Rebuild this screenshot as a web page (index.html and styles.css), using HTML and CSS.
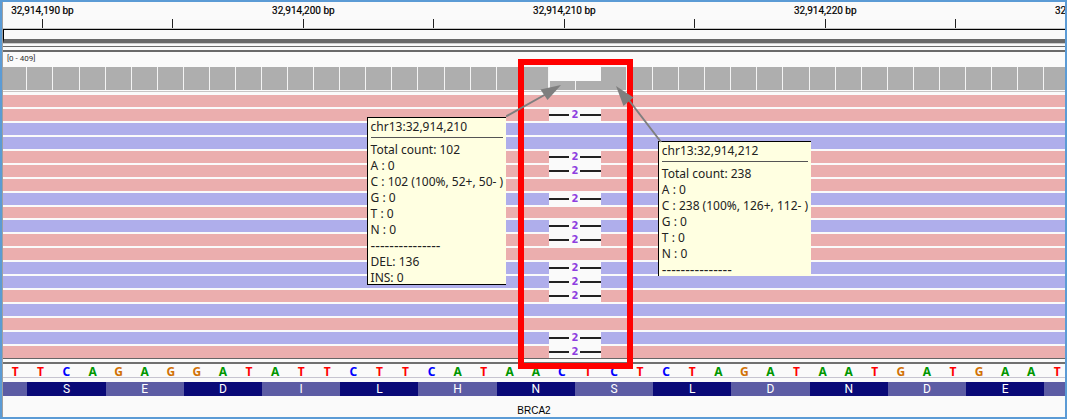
FILE: index.html
```html
<!DOCTYPE html>
<html lang="en">
<head>
<meta charset="utf-8">
<title>BRCA2 alignments</title>
<link rel="stylesheet" href="styles.css">
</head>
<body>
<main class="viewer">
  <div class="ruler" id="ruler"></div>
  <div class="region"></div>
  <div class="divider-strip"></div>
  <section class="coverage">
    <div class="range">[0 - 409]</div>
    <div class="bases bars" id="bars"></div>
  </section>
  <section class="reads" id="reads"></section>
  <div class="split"></div>
  <section class="sequence">
    <div class="bases letters" id="letters"></div>
    <div class="bases aminos" id="aminos"></div>
    <div class="gene">BRCA2</div>
  </section>

  <div class="highlight"></div>
  <aside class="tip tip-left">
    <div>chr13:32,914,210</div>
    <hr>
    <div>Total count: 102</div>
    <div>A : 0</div>
    <div>C : 102 (100%, 52+, 50- )</div>
    <div>G : 0</div>
    <div>T : 0</div>
    <div>N : 0</div>
    <div class="dashes">---------------</div>
    <div>DEL: 136</div>
    <div>INS: 0</div>
  </aside>
  <aside class="tip tip-right">
    <div>chr13:32,914,212</div>
    <hr>
    <div>Total count: 238</div>
    <div>A : 0</div>
    <div>C : 238 (100%, 126+, 112- )</div>
    <div>G : 0</div>
    <div>T : 0</div>
    <div>N : 0</div>
    <div class="dashes">---------------</div>
  </aside>
  <svg class="arrow arrow-left" width="56" height="34" viewBox="0 0 56 34" aria-hidden="true">
    <path d="M0 32.500 42 9" stroke="#7f7f7f" stroke-width="2" fill="none"/>
    <path d="M55 1 34.500 5.500 41.500 16z" fill="#7f7f7f"/>
  </svg>
  <svg class="arrow arrow-right" width="48" height="58" viewBox="0 0 48 58" aria-hidden="true">
    <path d="M12 14 45 57" stroke="#7f7f7f" stroke-width="2" fill="none"/>
    <path d="M0 1 17.500 12.500 7.500 21z" fill="#7f7f7f"/>
  </svg>
</main>
<script src="tracks.js"></script>
</body>
</html>
```
FILE: styles.css
```css
* { box-sizing: border-box; }
body { margin: 0; font-family: "Liberation Sans", Arial, sans-serif; color: #000; }

.viewer {
  position: relative;
  overflow: hidden;
  border: 2px solid #5b9bd5;
  background: #fafafa;
  box-shadow: inset 1px 0 #a0a0a0;
  padding-left: 1px;
}

/* position ruler */
.ruler {
  display: grid;
  grid-template-columns: 394fr repeat(8, 1304fr) 0;
  width: 102%;
  height: 27px;
  padding-top: 3px;
  border-bottom: 1px solid #c4c4c4;
}
.mark { display: flex; flex-direction: column; align-items: center; width: 0; }
.mark span { font: 10px/12px Roboto, sans-serif; white-space: nowrap; -webkit-text-stroke: 0.2px #000; }
.mark::after { content: ""; width: 1px; height: 9px; margin-top: auto; background: #222; flex-shrink: 0; }
.mark:first-child { grid-column: 2; }

.region { height: 14px; border: solid #000; border-width: 1px 0 0 1px; border-bottom: 4px solid #696969; }
.divider-strip { height: 9px; border-top: 1px solid #ccc; border-bottom: 2px solid #6a6a6a; padding-top: 2px; }
.divider-strip::before { content: ""; display: block; height: 1px; background: #6a6a6a; }

/* one column per reference base, the first one partly scrolled away */
.bases {
  display: grid;
  grid-template-columns: minmax(0, 244fr) repeat(40, minmax(0, 261fr));
  width: 100.5%;
}

.coverage { padding-bottom: 3px; }
.range { height: 15px; padding-left: 4px; font-size: 8px; line-height: 14px; color: #333; font-family: Roboto, sans-serif; }
.bars { height: 25px; align-items: end; border-bottom: 1px solid #c8c4c4; padding-bottom: 1px; }
.bars div { height: 23px; background: #aeaeae; border-right: 1px solid #f4f4f4; }
.bars .low { height: 9px; border-left: 1px solid #f4f4f4; border-right: 0; }

.reads {
  display: grid;
  grid-auto-rows: 1fr;
  gap: 2px;
  height: 264px;
  border-bottom: 1px solid #666;
}
.read { background: #ebaeae; align-items: stretch; }
.read.reverse { background: #afaeeb; }
.deletion {
  grid-column: 22 / 24;
  display: flex;
  align-items: center;
  gap: 2px;
  background: #fafafa;
  font: bold 10px/12px "DejaVu Sans", sans-serif;
  color: #8e3fe0;
}
.deletion::before, .deletion::after { content: ""; flex: 1; height: 2px; background: #222; }

.split { height: 5px; border-bottom: 2px solid #707070; }

.letters { height: 14px; padding-top: 1px; border-bottom: 1px solid #c6c4d0; font: bold 12px/14px "Noto Sans", sans-serif; text-align: center; }
.A { color: #009600; }
.C { color: #0000ff; }
.G { color: #d17105; }
.T { color: #ff0000; }

.aminos { margin-top: 4px; height: 14px; color: #fff; font: 12px/14px Roboto, sans-serif; text-align: center; background: #5c5ca4; }
.aminos div { grid-column: span 3; }
.aminos div:first-child { grid-column: 2 / span 3; }
.aminos div:nth-child(odd) { background: #0a0a78; }

.gene { height: 21px; padding-top: 9px; font-size: 10px; line-height: 12px; text-align: center; }

/* annotations over the tracks */
.highlight { position: absolute; left: 48.5%; top: 57px; width: 115px; height: 310px; border: 6px solid #ff0000; }
.arrow { position: absolute; }
.arrow-left { left: 47.400%; top: 82px; }
.arrow-right { left: 57.800%; top: 83px; }
.tip {
  position: absolute;
  padding: 1px 3px 0;
  border: solid #000;
  border-width: 1px 0 0 1px;
  background: #ffffe1;
  color: #222;
  font: 12px/16px "Noto Sans", sans-serif;
  white-space: nowrap;
}
.tip hr { height: 1px; margin: 2px 0 4px; border: 0; background: #555; }
.tip div:last-child { margin-bottom: -2px; }
.tip .dashes { font: 14px/16px "Liberation Sans", sans-serif; }
.tip-left { left: 34.300%; top: 115px; width: 139px; border-bottom-width: 1px; }
.tip-right { left: 61.700%; top: 139px; width: 153px; }
```
FILE: tracks.js
```js
const add = (parent, className, text) => {
  const el = document.createElement("div");
  if (className) el.className = className;
  if (text) el.textContent = text;
  parent.append(el);
  return el;
};
const byId = (id) => document.getElementById(id);

// A tick every 5 bases, a label every 10
for (let i = 0; i < 9; i++) {
  const mark = add(byId("ruler"), "mark");
  if (i % 2 === 0) {
    const label = document.createElement("span");
    label.textContent = (32914190 + i * 5).toLocaleString("en-US") + " bp";
    mark.append(label);
  }
}

const sequence = "TTCAGAGGATATTCTTCATAACTCTCTAGATAATGATGAAT";
[...sequence].forEach((base, i) => {
  add(byId("bars"), i === 21 || i === 22 ? "low" : "");
  add(byId("letters"), base, base);
});

[..."SEDILHNSLDNDE"].forEach((amino) => add(byId("aminos"), "", amino));

// f = forward, r = reverse; upper case marks a read with the 2-base deletion
[..."fFrrFFfRfRFfRRFrfRF"].forEach((kind) => {
  const reverse = kind.toLowerCase() === "r";
  const read = add(byId("reads"), "bases read" + (reverse ? " reverse" : ""));
  if (kind !== kind.toLowerCase()) add(read, "deletion", "2");
});
```
